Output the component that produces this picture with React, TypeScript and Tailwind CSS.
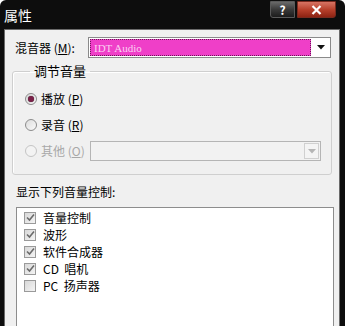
import React from 'react';

const font = "font-['Noto_Sans_CJK_SC','Noto_Sans',sans-serif]";

const items = [
  { label: '音量控制', checked: true },
  { label: '波形', checked: true },
  { label: '软件合成器', checked: true },
  { label: 'CD\u00a0 唱机', checked: true },
  { label: 'PC\u00a0 扬声器', checked: false },
];

const Radio = ({ on, disabled }: { on?: boolean; disabled?: boolean }) => (
  <span
    className={`flex h-[12px] w-[12px] items-center justify-center rounded-full border ${
      disabled ? 'border-[#c4c4c4] bg-[#f3f3f3]' : 'border-[#8c8c8c] bg-gradient-to-br from-[#dcdcdc] to-[#fafafa]'
    }`}
  >
    {on && <span className="h-[6px] w-[6px] rounded-full bg-[#7a2048] shadow-[0_0_1px_#333]" />}
  </span>
);

const Check = ({ on }: { on: boolean }) => (
  <span className="flex h-[12px] w-[12px] items-center justify-center border border-[#9a9a9a] bg-gradient-to-br from-[#d8d8d8] to-[#f4f4f4]">
    {on && (
      <svg width="9" height="9" viewBox="0 0 9 9">
        <path d="M1 4.5 L3.5 7 L8 1.5" fill="none" stroke="#6b6b6b" strokeWidth="1.6" />
      </svg>
    )}
  </span>
);

const Arrow = ({ color }: { color: string }) => (
  <svg width="8" height="5" viewBox="0 0 8 5">
    <path d="M0 0 H8 L4 4.5 Z" fill={color} />
  </svg>
);

export default function App() {
  return (
    <div className={`flex h-[326px] w-[345px] flex-col overflow-hidden rounded-t-[6px] bg-[#0d0d0d] ${font} text-[12px] leading-[16px] text-black`}>
      {/* titlebar */}
      <div className="flex h-[29px] shrink-0 items-start justify-between pl-[4px] pr-[9px]">
        <span className="mt-[7px] text-[14px] leading-[16px] text-white">属性</span>
        <div className="mt-[1px] flex gap-[2px]">
          <div className="flex h-[17px] w-[25px] items-center justify-center rounded-bl-[3px] border border-[#5a5a5a] bg-gradient-to-b from-[#6a6a6a] via-[#3a3a3a] to-[#1c1c1c] text-[12px] font-bold leading-none text-white">
            ?
          </div>
          <div className="flex h-[17px] w-[39px] items-center justify-center rounded-br-[3px] border border-[#7a2a1e] bg-gradient-to-b from-[#d77463] via-[#b8412c] to-[#8e2313]">
            <svg width="11" height="10" viewBox="0 0 11 10">
              <path d="M1.5 1 L9.5 9 M9.5 1 L1.5 9" stroke="#fff" strokeWidth="2.2" />
            </svg>
          </div>
        </div>
      </div>

      {/* body */}
      <div className="ml-[4px] mr-[5px] flex-1 border border-[#6a6a6a] bg-[#f0f0f0]">
        <div className="mt-[7px] flex h-[21px] items-center pl-[10px] pr-[8px]">
          <span className="w-[73px]">
            混音器 (<span className="underline">M</span>):
          </span>
          <div className="flex h-[21px] flex-1 items-center border border-[#8a8a8a] bg-white pl-[1px]">
            <div className="flex h-[17px] flex-1 items-center border border-dotted border-[#6a1a58] bg-[#ef3fc8] pl-[3px] font-['Liberation_Serif',serif] text-[11px] text-[#fbd0f2]">
              IDT Audio
            </div>
            <div className="flex w-[19px] justify-center">
              <Arrow color="#111" />
            </div>
          </div>
        </div>

        <fieldset className="mx-[7px] mt-[5px] rounded-[3px] border border-[#cfcfcf] pb-[10px] pl-[12px] pr-[10px] pt-[7px] shadow-[inset_1px_1px_0_#fff]">
          <legend className="ml-[5px] px-[4px] text-[13px]">调节音量</legend>
          <div className="flex h-[26px] items-center gap-[4px]">
            <Radio on />
            <span>
              播放 (<span className="underline">P</span>)
            </span>
          </div>
          <div className="flex h-[26px] items-center gap-[4px]">
            <Radio />
            <span>
              录音 (<span className="underline">R</span>)
            </span>
          </div>
          <div className="flex h-[26px] items-center gap-[4px]">
            <Radio disabled />
            <span className="w-[45px] whitespace-nowrap text-[#a8a8a8]">
              其他 (<span className="underline">O</span>)
            </span>
            <div className="flex h-[20px] flex-1 items-center justify-end border border-[#b5b5b5] bg-[#f2f2f2] pr-[1px]">
              <div className="flex h-[16px] w-[15px] items-center justify-center border border-[#d0d0d0] bg-[#f4f4f4]">
                <Arrow color="#b5b5b5" />
              </div>
            </div>
          </div>
        </fieldset>

        <div className="ml-[11px] mt-[9px]">显示下列音量控制:</div>
        <div className="ml-[11px] mr-[5px] mt-[7px] h-[130px] border border-[#8d8d8d] bg-white pl-[7px] pt-[1px]">
          {items.map((it, i) => (
            <div key={i} className="flex h-[17px] items-center gap-[7px]">
              <Check on={it.checked} />
              <span>{it.label}</span>
            </div>
          ))}
        </div>
      </div>
    </div>
  );
}
